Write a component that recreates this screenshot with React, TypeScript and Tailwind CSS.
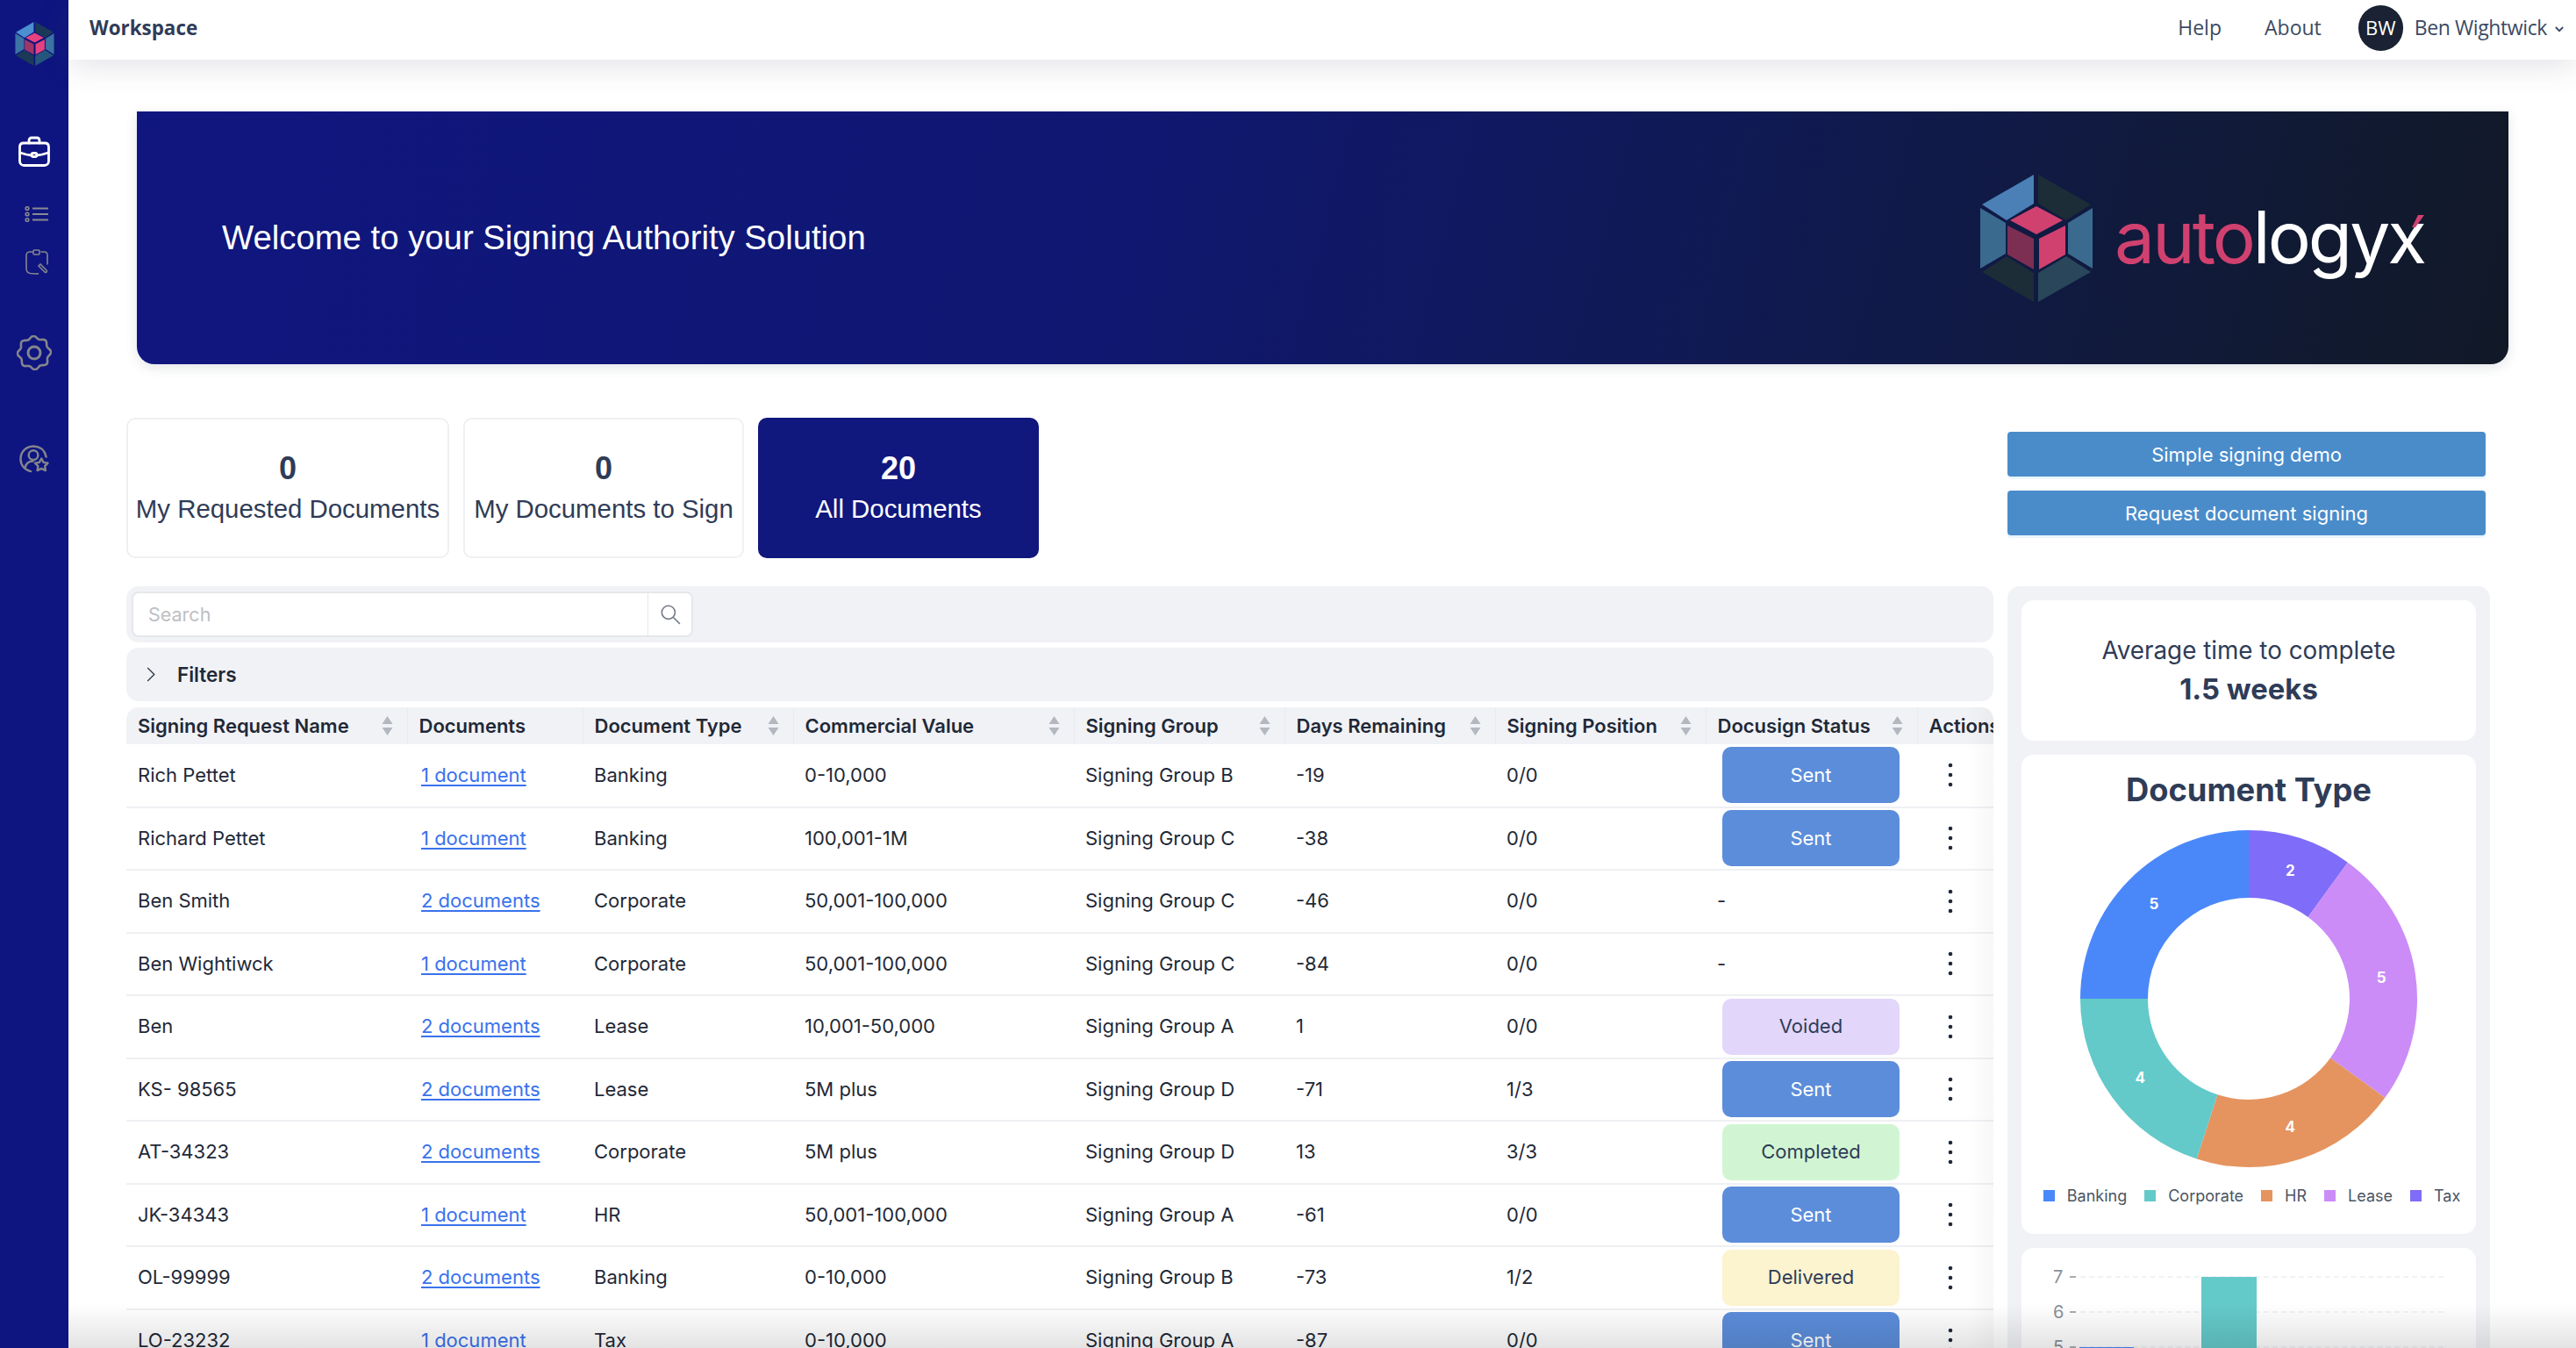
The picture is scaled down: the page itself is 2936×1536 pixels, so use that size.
import React from 'react'

const rows = [
  { name: 'Rich Pettet', docs: '1 document', type: 'Banking', value: '0-10,000', group: 'Signing Group B', days: '-19', pos: '0/0', status: 'Sent' },
  { name: 'Richard Pettet', docs: '1 document', type: 'Banking', value: '100,001-1M', group: 'Signing Group C', days: '-38', pos: '0/0', status: 'Sent' },
  { name: 'Ben Smith', docs: '2 documents', type: 'Corporate', value: '50,001-100,000', group: 'Signing Group C', days: '-46', pos: '0/0', status: '-' },
  { name: 'Ben Wightiwck', docs: '1 document', type: 'Corporate', value: '50,001-100,000', group: 'Signing Group C', days: '-84', pos: '0/0', status: '-' },
  { name: 'Ben', docs: '2 documents', type: 'Lease', value: '10,001-50,000', group: 'Signing Group A', days: '1', pos: '0/0', status: 'Voided' },
  { name: 'KS- 98565', docs: '2 documents', type: 'Lease', value: '5M plus', group: 'Signing Group D', days: '-71', pos: '1/3', status: 'Sent' },
  { name: 'AT-34323', docs: '2 documents', type: 'Corporate', value: '5M plus', group: 'Signing Group D', days: '13', pos: '3/3', status: 'Completed' },
  { name: 'JK-34343', docs: '1 document', type: 'HR', value: '50,001-100,000', group: 'Signing Group A', days: '-61', pos: '0/0', status: 'Sent' },
  { name: 'OL-99999', docs: '2 documents', type: 'Banking', value: '0-10,000', group: 'Signing Group B', days: '-73', pos: '1/2', status: 'Delivered' },
  { name: 'LO-23232', docs: '1 document', type: 'Tax', value: '0-10,000', group: 'Signing Group A', days: '-87', pos: '0/0', status: 'Sent' },
]

const columns = [
  { label: 'Signing Request Name', sort: true, width: 'w-[320px]' },
  { label: 'Documents', sort: false, width: 'w-[200px]' },
  { label: 'Document Type', sort: true, width: 'w-[240px]' },
  { label: 'Commercial Value', sort: true, width: 'w-[320px]' },
  { label: 'Signing Group', sort: true, width: 'w-[240px]' },
  { label: 'Days Remaining', sort: true, width: 'w-[240px]' },
  { label: 'Signing Position', sort: true, width: 'w-[240px]' },
  { label: 'Docusign Status', sort: true, width: 'w-[241px]' },
  { label: 'Actions', sort: false, width: 'w-[120px]' },
]

const statusStyles: Record<string, string> = {
  Sent: 'bg-[#5c8dda] text-white',
  Voided: 'bg-[#e2d6fb] text-[#2f3c57]',
  Completed: 'bg-[#d1f5d3] text-[#2f3c57]',
  Delivered: 'bg-[#fcf3cf] text-[#2f3c57]',
}

const segments = [
  { label: 'Tax', value: 2, color: '#7f6cf9' },
  { label: 'Lease', value: 5, color: '#cb8cf8' },
  { label: 'HR', value: 4, color: '#e5945f' },
  { label: 'Corporate', value: 4, color: '#64c9c9' },
  { label: 'Banking', value: 5, color: '#4a88fa' },
]

const legend = [segments[4], segments[3], segments[2], segments[1], segments[0]]

const darkLogo = { a: '#4a80b5', b: '#1c2d38', c: '#3b6a8f', d: '#29465a', e: '#d0416f', f: '#7c2f52' }
const navLogo = { a: '#4b8fd0', b: '#1b3a58', c: '#3c74a3', d: '#25577c', e: '#e6437f', f: '#a03566' }

function Hexagon({ palette, className }: { palette: typeof darkLogo; className: string }) {
  return (
    <svg viewBox="0 0 128 145" className={className}>
      <polygon points="61,0 61,33 30,52 2,34" fill={palette.a} />
      <polygon points="66,0 66,33 98,52 126,34" fill={palette.b} />
      <polygon points="0,38 29,55 29,90 0,107" fill={palette.c} />
      <polygon points="128,38 100,55 100,90 128,107" fill={palette.c} />
      <polygon points="2,111 30,93 61,112 61,145" fill={palette.b} />
      <polygon points="126,111 98,93 66,112 66,145" fill={palette.d} />
      <polygon points="64,36 94,52 64,68 34,52" fill={palette.e} />
      <polygon points="31,58 61,73 61,108 31,91" fill={palette.f} />
      <polygon points="67,73 97,58 97,91 67,108" fill={palette.e} />
    </svg>
  )
}

function BriefcaseIcon() {
  return (
    <svg viewBox="0 0 36 36" className="w-[36px] h-[36px]" fill="none" stroke="#fff" strokeWidth="2.800" strokeLinecap="round" strokeLinejoin="round">
      <path d="M12 8V5.500C12 3 13 2 15 2h6c2 0 3 1 3 3.500V8" />
      <path d="M6 8h24c2.600 0 4.500 1.600 4.500 4.500v16c0 3-2 5-4.800 5H6.300c-2.800 0-4.800-2-4.800-5v-16C1.500 9.600 3.400 8 6 8z" />
      <path d="M2 19c5 1.800 10 2.800 13 3M34 19c-5 1.800-10 2.800-13 3" />
      <rect x="15" y="19.500" width="6" height="4" rx="2" />
    </svg>
  )
}

function ListIcon() {
  return (
    <svg viewBox="0 0 28 18" className="w-[28px] h-[18px]" fill="none" stroke="#8a8a90" strokeWidth="1.600">
      <circle cx="3" cy="2.500" r="1.800" />
      <circle cx="3" cy="9" r="1.800" />
      <circle cx="3" cy="15.500" r="1.800" />
      <path d="M9 2.500h18M9 9h18M9 15.500h18" strokeWidth="1.800" />
    </svg>
  )
}

function ClipboardIcon() {
  return (
    <svg viewBox="0 0 26 29" className="w-[26px] h-[29px]" fill="none" stroke="#85858c" strokeWidth="1.600" strokeLinecap="round">
      <path d="M8 3H5C2.500 3 1 4.500 1 7v15c0 3 1.500 5 4.500 5.500 3 .4 6 .5 9 .4" />
      <path d="M18 3h3.500C24 3 25 4.500 25 7v10" />
      <rect x="9" y="1" width="7" height="5" rx="1" />
      <path d="M15 19l2-2 7 7c1 1 .3 2.500-1.500 2.500z" />
    </svg>
  )
}

function gearPath() {
  const pts: string[] = []
  for (let i = 0; i <= 120; i++) {
    const t = (i / 120) * Math.PI * 2
    const r = 17.600 + 1.500 * Math.cos(8 * t + Math.PI / 8)
    pts.push(`${(20 + r * Math.cos(t)).toFixed(2)},${(20 + r * Math.sin(t)).toFixed(2)}`)
  }
  return `M${pts.join('L')}Z`
}

function GearIcon() {
  return (
    <svg viewBox="0 0 40 40" className="w-[40px] h-[40px]" fill="none" stroke="#85858c" strokeWidth="2.600">
      <path d={gearPath()} />
      <circle cx="20" cy="20" r="7" strokeWidth="3" />
    </svg>
  )
}

function UserStarIcon() {
  return (
    <svg viewBox="0 0 35 33" className="w-[34px] h-[32px]" fill="none" stroke="#85858c" strokeWidth="2.500" strokeLinecap="round" strokeLinejoin="round">
      <path d="M31.500 14C30 6.500 24.500 1.500 16.500 1.500 8 1.500 1.500 8 1.500 16.500c0 7.500 5 13 12 14.500" />
      <circle cx="16.500" cy="12" r="5.500" />
      <path d="M7 26c1-4.500 4-7 9-7" />
      <path d="M26 16l2.500 4.500 5 .8-3.500 3.600.8 5.100-4.800-2.300-4.800 2.300.8-5.100-3.500-3.600 5-.8z" />
    </svg>
  )
}

function SortIcon() {
  return (
    <svg viewBox="0 0 13 22" className="w-[13px] h-[22px] shrink-0" fill="#b3b7bf">
      <polygon points="6.500,0 12.500,9 .5,9" />
      <polygon points="6.500,22 12.500,13 .5,13" />
    </svg>
  )
}

function Kebab() {
  return (
    <svg viewBox="0 0 6 28" className="w-[6px] h-[28px]" fill="#1f2937">
      <circle cx="3" cy="3" r="2.300" />
      <circle cx="3" cy="14" r="2.300" />
      <circle cx="3" cy="25" r="2.300" />
    </svg>
  )
}

function polar(r: number, deg: number) {
  const a = (deg * Math.PI) / 180
  return [192 + r * Math.sin(a), 192 - r * Math.cos(a)]
}

function Donut() {
  let angle = 0
  return (
    <svg viewBox="0 0 384 384" className="w-[384px] h-[384px]">
      {segments.map((s) => {
        const start = angle
        const end = angle + s.value * 18
        angle = end
        const [x1, y1] = polar(192, start)
        const [x2, y2] = polar(192, end)
        const [x3, y3] = polar(115, end)
        const [x4, y4] = polar(115, start)
        const [lx, ly] = polar(153, (start + end) / 2)
        return (
          <g key={s.label}>
            <path d={`M${x1} ${y1}A192 192 0 0 1 ${x2} ${y2}L${x3} ${y3}A115 115 0 0 0 ${x4} ${y4}Z`} fill={s.color} />
            <text x={lx} y={ly + 6} textAnchor="middle" fill="#fff" fontSize="17" fontWeight="700" fontFamily="Inter, sans-serif">
              {s.value}
            </text>
          </g>
        )
      })}
    </svg>
  )
}

function StatCard({ count, label, width, active }: { count: string; label: string; width: string; active?: boolean }) {
  return (
    <div
      className={`${width} h-[160px] rounded-[10px] flex flex-col items-center justify-center gap-[4px] font-['Liberation_Sans',sans-serif] ${
        active ? 'bg-[#10177d] text-white' : 'bg-white border-2 border-[#eff0f3] text-[#2f3c57]'
      }`}
    >
      <div className="text-[36px] leading-[44px] font-bold">{count}</div>
      <div className="text-[29.400px] leading-[40px] whitespace-nowrap">{label}</div>
    </div>
  )
}

export default function App() {
  return (
    <div className="relative flex h-[1536px] w-[2936px] overflow-hidden bg-white font-['Inter',sans-serif]">
      <aside className="w-[78px] shrink-0 bg-[#0e1580] flex flex-col items-center">
        <Hexagon palette={navLogo} className="mt-[25px] ml-[1px] w-[45px] h-[50px]" />
        <div className="mt-[80px] -ml-[1px]"><BriefcaseIcon /></div>
        <div className="mt-[44px] ml-[5px]"><ListIcon /></div>
        <div className="mt-[31px] ml-[5px]"><ClipboardIcon /></div>
        <div className="mt-[69px] -ml-[1px]"><GearIcon /></div>
        <div className="mt-[85px] -ml-[1px]"><UserStarIcon /></div>
      </aside>

      <main className="flex-1 min-w-0 flex flex-col">
        <header className="relative z-10 h-[68px] shrink-0 bg-white pb-[5px] shadow-[0_6px_36px_rgba(60,70,90,0.16)] flex items-center justify-between pl-[24px] pr-[14px] font-['Open_Sans',sans-serif] text-[#3c4a63]">
          <span className="text-[22.400px] font-bold text-[#2f3c57]">Workspace</span>
          <div className="flex items-center text-[23px]">
            <span>Help</span>
            <span className="ml-[49px]">About</span>
            <span className="ml-[42px] w-[51px] h-[52px] rounded-full bg-[#1a2233] text-white text-[22px] flex items-center justify-center">BW</span>
            <span className="ml-[13px] tracking-[-0.4px]">Ben Wightwick</span>
            <svg viewBox="0 0 12 8" className="ml-[9px] mt-[3px] w-[10px] h-[7px]" fill="none" stroke="#3c4a63" strokeWidth="2.200">
              <path d="M1 1l5 5 5-5" />
            </svg>
          </div>
        </header>

        <div className="mt-[59px] ml-[78px] w-[2703px] h-[288px] shrink-0 rounded-b-[20px] bg-[linear-gradient(105deg,#10167f_0%,#0f1772_40%,#101a4c_72%,#111a33_90%,#111827_100%)] shadow-[0_4px_14px_rgba(60,70,90,0.14)] flex items-center justify-between pl-[97px] pr-[96px]">
          <span className="font-['Liberation_Sans',sans-serif] text-[38.300px] text-white">Welcome to your Signing Authority Solution</span>
          <div className="flex items-center">
            <Hexagon palette={darkLogo} className="w-[128px] h-[145px]" />
            <span className="relative ml-[25px] text-[82px] leading-[100px] font-normal tracking-[-3px] text-white">
              <span className="text-[#d0416f]">auto</span>logyx
              <svg viewBox="0 0 14 14" className="absolute right-[0px] top-[24px] w-[14px] h-[14px]" fill="#d0416f">
                <polygon points="7,0 14,0 4,14 0,14" />
              </svg>
            </span>
          </div>
        </div>

        <div className="mt-[61px] pl-[66px] pr-[103px] flex justify-between items-start shrink-0">
          <div className="flex gap-[16px]">
            <StatCard count="0" label="My Requested Documents" width="w-[368px]" />
            <StatCard count="0" label="My Documents to Sign" width="w-[320px]" />
            <StatCard count="20" label="All Documents" width="w-[320px]" active />
          </div>
          <div className="w-[545px] mt-[16px] flex flex-col gap-[16px] text-[22px] text-white">
            <button className="h-[51px] pt-[2px] rounded-[4px] bg-[#4a8cca] shadow-[0_3px_0_#ebf5ff]">Simple signing demo</button>
            <button className="h-[51px] pt-[2px] rounded-[4px] bg-[#4a8cca] shadow-[0_3px_0_#ebf5ff]">Request document signing</button>
          </div>
        </div>

        <div className="mt-[32px] pl-[66px] flex gap-[16px] flex-1 min-h-0">
          <section className="w-[2128px] shrink-0 flex flex-col">
            <div className="h-[64px] bg-[#f1f2f6] rounded-[14px] px-[6px] flex items-center">
              <div className="w-[640px] h-[52px] bg-white rounded-[8px] border-2 border-[#e5e7eb] flex items-center">
                <span className="flex-1 pl-[17px] text-[21.500px] text-[#bdbfc4]">Search</span>
                <span className="w-[50px] h-full border-l border-[#e5e7eb] flex items-center justify-center">
                  <svg viewBox="0 0 24 24" className="w-[26px] h-[26px]" fill="none" stroke="#777d87" strokeWidth="1.500">
                    <circle cx="10" cy="10" r="7" />
                    <path d="M15 15l7 7" />
                  </svg>
                </span>
              </div>
            </div>

            <div className="mt-[6px] h-[61px] bg-[#f1f2f6] rounded-[14px] flex items-center pl-[23px]">
              <svg viewBox="0 0 10 18" className="w-[10px] h-[17px]" fill="none" stroke="#374151" strokeWidth="1.500">
                <path d="M1 1l8 8-8 8" />
              </svg>
              <span className="ml-[25px] text-[22.500px] font-semibold text-[#1f2937]">Filters</span>
            </div>

            <div className="relative mt-[7px] flex-1 min-h-0 overflow-hidden rounded-t-[14px]">
              <table className="table-fixed w-[2161px] border-collapse text-[22px] text-[#1f2937]">
                <colgroup>
                  {columns.map((c) => (
                    <col key={c.label} className={c.width} />
                  ))}
                </colgroup>
                <thead>
                  <tr className="h-[42px] bg-[#f1f2f6]">
                    {columns.map((c, i) => (
                      <th key={c.label} className={`px-[13px] text-left font-semibold ${i ? 'border-l border-[#e9ebf0]' : ''}`}>
                        <div className="flex items-center justify-between pr-[3px] whitespace-nowrap">
                          {c.label}
                          {c.sort && <SortIcon />}
                        </div>
                      </th>
                    ))}
                  </tr>
                </thead>
                <tbody>
                  {rows.map((r) => (
                    <tr key={r.name} className="h-[71.500px] border-b-2 border-[#eff0f3]">
                      <td className="px-[13px]">{r.name}</td>
                      <td className="pl-[16px]">
                        <a href="#" className="text-[#3a72ec] underline underline-offset-[3px]">{r.docs}</a>
                      </td>
                      <td className="px-[13px]">{r.type}</td>
                      <td className="px-[13px]">{r.value}</td>
                      <td className="px-[13px]">{r.group}</td>
                      <td className="px-[13px]">{r.days}</td>
                      <td className="px-[13px]">{r.pos}</td>
                      <td className="px-[13px]">
                        {r.status === '-' ? (
                          '-'
                        ) : (
                          <div className={`ml-[6px] w-[202px] h-[64px] rounded-[10px] flex items-center justify-center ${statusStyles[r.status]}`}>
                            {r.status}
                          </div>
                        )}
                      </td>
                      <td className="pl-[35px]">
                        <div className="flex"><Kebab /></div>
                      </td>
                    </tr>
                  ))}
                </tbody>
              </table>
              <div className="absolute right-0 inset-y-0 w-[30px] bg-gradient-to-r from-transparent to-black/[0.03]" />
            </div>
          </section>

          <section className="w-[550px] shrink-0 bg-[#f1f2f6] rounded-t-[14px] px-[16px] pt-[16px] flex flex-col gap-[16px] text-[#2f3c57]">
            <div className="h-[160px] shrink-0 bg-white rounded-[14px] flex flex-col items-center justify-center">
              <span className="text-[27.800px] leading-[42px]">Average time to complete</span>
              <span className="text-[32.800px] leading-[47px] font-bold">1.5 weeks</span>
            </div>

            <div className="h-[546px] shrink-0 bg-white rounded-[14px] flex flex-col items-center">
              <h2 className="mt-[14px] text-[36.300px] leading-[52px] font-bold">Document Type</h2>
              <div className="mt-[20px]"><Donut /></div>
              <div className="mt-[19px] ml-[7px] flex items-center gap-[20px] text-[18px] text-[#4b5563]">
                {legend.map((s) => (
                  <span key={s.label} className="flex items-center gap-[14px]">
                    <i className="w-[13px] h-[13px]" style={{ backgroundColor: s.color }} />
                    {s.label}
                  </span>
                ))}
              </div>
            </div>

            <div className="flex-1 bg-white rounded-t-[14px] pt-[23px] pl-[36px] text-[20px] text-[#8b9098] overflow-hidden">
              <div className="relative">
                {['7', '6', '5'].map((n) => (
                  <div key={n} className="h-[40px] flex items-start">
                    <span className="w-[19px] leading-[20px]">{n}</span>
                    <span className="mt-[9px] w-[7px] h-[2px] bg-[#a9adb4]" />
                    <span className="ml-[5px] mt-[9px] w-[414px] border-t-2 border-dashed border-[#f1f2f5]" />
                  </div>
                ))}
                <div className="absolute left-[169px] top-[10px] w-[63px] h-[120px] bg-[#64c9c9]" />
                <div className="absolute left-[30px] top-[90px] w-[62px] h-[40px] bg-[#4a88fa]" />
              </div>
            </div>
          </section>
        </div>
      </main>

      <div className="absolute left-[78px] right-0 bottom-0 h-[50px] bg-gradient-to-b from-transparent to-black/[0.11]" />
    </div>
  )
}
